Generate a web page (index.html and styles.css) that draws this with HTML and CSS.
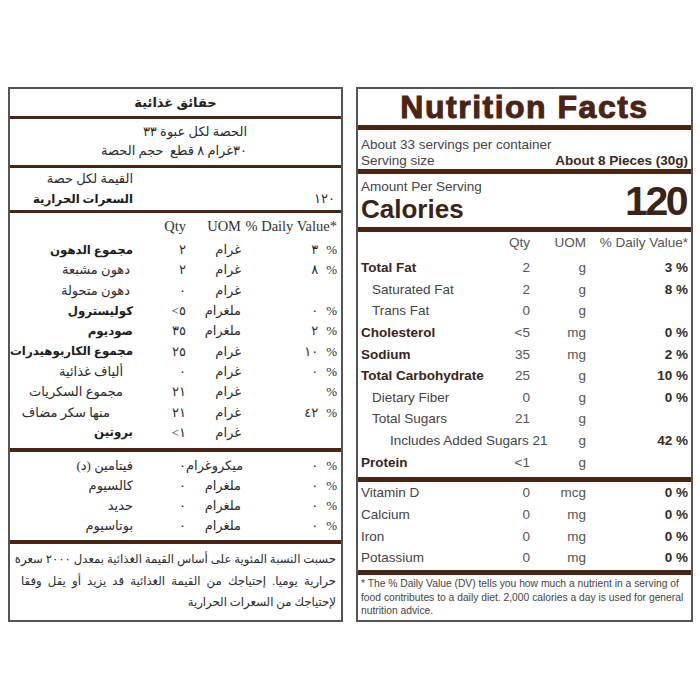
FILE: index.html
```html
<!DOCTYPE html>
<html lang="en">
<head>
<meta charset="utf-8">
<title>Nutrition Facts</title>
<link rel="stylesheet" href="styles.css">
</head>
<body>
<div class="page">
  <section class="panel ar" lang="ar">
    <div class="ar-title" dir="rtl">حقائق غذائية</div>
    <div class="rule r3"></div>
    <div class="ar-serving" dir="rtl">
      <div>الحصة لكل عبوة ٣٣</div>
      <div>٣٠غرام ٨ قطع &nbsp;حجم الحصة</div>
    </div>
    <div class="rule r3"></div>
    <div class="ar-cal">
      <div class="ar-name" dir="rtl">القيمة لكل حصة</div>
      <div></div>
      <div class="ar-name b" dir="rtl">السعرات الحرارية</div>
      <div class="ar-calv">١٢٠</div>
    </div>
    <div class="rule r3"></div>
    <div class="ar-table">
      <div class="ar-row ar-head"><span></span><span class="q">Qty</span><span class="u">UOM</span><span class="hd">% Daily Value*</span></div>
      <div class="ar-row"><span class="n b" dir="rtl">مجموع الدهون</span><span class="q">٢</span><span class="u">غرام</span><span class="d"><i>٣</i><i>%</i></span></div>
      <div class="ar-row"><span class="n s1" dir="rtl">دهون مشبعة</span><span class="q">٢</span><span class="u">غرام</span><span class="d"><i>٨</i><i>%</i></span></div>
      <div class="ar-row"><span class="n s1" dir="rtl">دهون متحولة</span><span class="q">٠</span><span class="u">غرام</span><span class="d"></span></div>
      <div class="ar-row"><span class="n b" dir="rtl">كوليسترول</span><span class="q">&lt;٥</span><span class="u">ملغرام</span><span class="d"><i>٠</i><i>%</i></span></div>
      <div class="ar-row"><span class="n b" dir="rtl">صوديوم</span><span class="q">٣٥</span><span class="u">ملغرام</span><span class="d"><i>٢</i><i>%</i></span></div>
      <div class="ar-row"><span class="n b" dir="rtl">مجموع الكاربوهيدرات</span><span class="q">٢٥</span><span class="u">غرام</span><span class="d"><i>١٠</i><i>%</i></span></div>
      <div class="ar-row"><span class="n s2" dir="rtl">ألياف غذائية</span><span class="q">٠</span><span class="u">غرام</span><span class="d"><i>٠</i><i>%</i></span></div>
      <div class="ar-row"><span class="n s2" dir="rtl">مجموع السكريات</span><span class="q">٢١</span><span class="u">غرام</span><span class="d"><i>%</i></span></div>
      <div class="ar-row"><span class="n s3" dir="rtl">منها سكر مضاف</span><span class="q">٢١</span><span class="u">غرام</span><span class="d"><i>٤٢</i><i>%</i></span></div>
      <div class="ar-row"><span class="n b" dir="rtl">بروتين</span><span class="q">&lt;١</span><span class="u">غرام</span><span class="d"></span></div>
    </div>
    <div class="rule r4"></div>
    <div class="ar-vit">
      <div class="ar-row"><span class="n" dir="rtl">فيتامين (د)</span><span class="q">٠</span><span class="u">ميكروغرام</span><span class="d"><i>٠</i><i>%</i></span></div>
      <div class="ar-row"><span class="n" dir="rtl">كالسيوم</span><span class="q">٠</span><span class="u">ملغرام</span><span class="d"><i>٠</i><i>%</i></span></div>
      <div class="ar-row"><span class="n" dir="rtl">حديد</span><span class="q">٠</span><span class="u">ملغرام</span><span class="d"><i>٠</i><i>%</i></span></div>
      <div class="ar-row"><span class="n" dir="rtl">بوتاسيوم</span><span class="q">٠</span><span class="u">ملغرام</span><span class="d"><i>٠</i><i>%</i></span></div>
    </div>
    <div class="rule r4"></div>
    <div class="ar-foot" dir="rtl">
      <div class="jl">حسبت النسبة المئوية على أساس القيمة الغذائية بمعدل ٢٠٠٠ سعرة</div>
      <div class="jl">حرارية يوميا. إحتياجك من القيمة الغذائية قد يزيد أو يقل وفقا</div>
      <div>لإحتياجك من السعرات الحرارية</div>
    </div>
  </section>

  <section class="panel en">
    <div class="en-title">Nutrition Facts</div>
    <div class="rule r5"></div>
    <div class="en-serv">
      <div class="l1">About 33 servings per container</div>
      <div class="l2"><span>Serving size</span><b>About 8 Pieces (30g)</b></div>
    </div>
    <div class="rule r5"></div>
    <div class="en-cal">
      <div class="en-cal-l">
        <div class="aps">Amount Per Serving</div>
        <div class="cal">Calories</div>
      </div>
      <div class="calv">120</div>
    </div>
    <div class="rule r5"></div>
    <div class="en-table">
      <div class="en-row en-head"><span></span><span class="q">Qty</span><span class="u">UOM</span><span class="d">% Daily Value*</span></div>
      <div class="en-row"><span class="n b">Total Fat</span><span class="q">2</span><span class="u">g</span><span class="d">3 %</span></div>
      <div class="en-row"><span class="n i1">Saturated Fat</span><span class="q">2</span><span class="u">g</span><span class="d">8 %</span></div>
      <div class="en-row"><span class="n i1">Trans Fat</span><span class="q">0</span><span class="u">g</span><span class="d"></span></div>
      <div class="en-row"><span class="n b">Cholesterol</span><span class="q">&lt;5</span><span class="u">mg</span><span class="d">0 %</span></div>
      <div class="en-row"><span class="n b">Sodium</span><span class="q">35</span><span class="u">mg</span><span class="d">2 %</span></div>
      <div class="en-row"><span class="n b">Total Carbohydrate</span><span class="q">25</span><span class="u">g</span><span class="d">10 %</span></div>
      <div class="en-row"><span class="n i1">Dietary Fiber</span><span class="q">0</span><span class="u">g</span><span class="d">0 %</span></div>
      <div class="en-row"><span class="n i1">Total Sugars</span><span class="q">21</span><span class="u">g</span><span class="d"></span></div>
      <div class="en-row"><span class="n i2 wide">Includes Added Sugars 21</span><span class="u">g</span><span class="d">42 %</span></div>
      <div class="en-row"><span class="n b">Protein</span><span class="q">&lt;1</span><span class="u">g</span><span class="d"></span></div>
    </div>
    <div class="rule r5"></div>
    <div class="en-vit">
      <div class="en-row"><span class="n">Vitamin D</span><span class="q">0</span><span class="u">mcg</span><span class="d">0 %</span></div>
      <div class="en-row"><span class="n">Calcium</span><span class="q">0</span><span class="u">mg</span><span class="d">0 %</span></div>
      <div class="en-row"><span class="n">Iron</span><span class="q">0</span><span class="u">mg</span><span class="d">0 %</span></div>
      <div class="en-row"><span class="n">Potassium</span><span class="q">0</span><span class="u">mg</span><span class="d">0 %</span></div>
    </div>
    <div class="rule r5"></div>
    <div class="en-foot">* The % Daily Value (DV) tells you how much a nutrient in a serving of food contributes to a daily diet. 2,000 calories a day is used for general nutrition advice.</div>
  </section>
</div>
</body>
</html>
```

FILE: styles.css
```css
* { box-sizing: border-box; }
body { margin: 0; background: #fff; }

.page {
  display: flex;
  gap: 13px;
  padding: 87px 7px 0 8px;
}

.panel {
  display: flex;
  flex-direction: column;
  height: 535px;
  border: 2px solid #555;
  background: #fff;
}

.rule { background: #4a2514; flex: none; }
.r3 { height: 3px; }
.r4 { height: 4px; }
.r5 { height: 5px; }

/* ---------- Arabic panel ---------- */
.ar {
  width: 335px;
  font-family: "Liberation Serif", "DejaVu Sans", serif;
  color: #2b2b2b;
  font-size: 13px;
}
.ar-title {
  height: 27px;
  display: flex;
  align-items: center;
  justify-content: center;
  font-weight: bold;
  font-size: 13px;
  color: #222;
}
.ar-serving {
  height: 46px;
  padding: 3px 94px 0 0;
  text-align: right;
  line-height: 19px;
}
.ar-cal {
  height: 42px;
  display: grid;
  grid-template-columns: 118px 1fr;
  grid-auto-rows: 20px;
  padding: 1px 5px 0 5px;
  align-items: center;
}
.ar-name { text-align: right; }
.b { font-weight: bold; color: #1c1c1c; }
.ar-row .n.b, .ar-name.b { font-size: 11.8px; }
.ar-calv { text-align: right; padding-right: 1px; }

.ar-table { height: 235px; }
.ar-row {
  display: grid;
  grid-template-columns: 118px 53px 55px 96px;
  padding: 0 4px 0 5px;
  height: 20.3px;
  align-items: center;
  white-space: nowrap;
}
.ar-head {
  height: 27px;
  font-size: 14.5px;
  color: #333;
}
.ar-head .hd { text-align: right; }
.ar-row .n { text-align: right; }
.ar-row .n.s1 { padding-right: 3px; }
.ar-row .n.s2 { padding-right: 10px; }
.ar-row .n.s3 { padding-right: 23px; }
.ar-row .q { text-align: right; }
.ar-row .u { text-align: right; }
.ar-row .d {
  display: flex;
  justify-content: flex-end;
  gap: 8px;
}
.ar-row .d i { font-style: normal; }

.ar-vit { padding: 4px 0; height: 88px; }
.ar-vit .ar-row { height: 20px; }

.ar-foot {
  flex: 1;
  padding: 5px 5px 0 11px;
  text-align: right;
  line-height: 21.5px;
  font-size: 11.7px;
  white-space: nowrap;
}
.ar-foot .jl { text-align: justify; text-align-last: justify; }

/* ---------- English panel ---------- */
.en {
  width: 337px;
  font-family: "Liberation Sans", Arial, sans-serif;
  color: #444;
  font-size: 13.5px;
}
.en-title {
  height: 36px;
  display: flex;
  align-items: center;
  justify-content: center;
  font-weight: bold;
  font-size: 32px;
  letter-spacing: 1.5px;
  color: #4a2514;
  -webkit-text-stroke: 1px #4a2514;
}
.en-serv {
  height: 39px;
  padding: 6px 3px 0 3px;
}
.en-serv .l1 { line-height: 17px; }
.en-serv .l2 {
  line-height: 16px;
  display: flex;
  justify-content: space-between;
}
.en-serv .l2 b { color: #3a2a22; }
.en-cal {
  height: 53px;
  display: flex;
  justify-content: space-between;
  align-items: center;
  padding: 0 3px;
}
.en-cal-l { align-self: stretch; padding-top: 5px; }
.aps { line-height: 16px; }
.cal {
  font-size: 26px;
  font-weight: bold;
  line-height: 28px;
  color: #3a2418;
}
.calv {
  font-size: 41px;
  font-weight: bold;
  letter-spacing: -2.5px;
  color: #3a2418;
  line-height: 40px;
  padding-right: 2px;
}

.en-table { height: 245px; }
.en-row {
  display: grid;
  grid-template-columns: 129px 40px 56px 102px;
  padding: 0 3px;
  height: 21.6px;
  align-items: center;
  white-space: nowrap;
}
.en-head {
  height: 25px;
  align-items: start;
  line-height: 21px;
}
.en-row .q, .en-row .u, .en-row .d { text-align: right; }
.en-row .q, .en-row .u { color: #555; }
.en-row .d { font-weight: bold; color: #3a2a22; }
.en-head .q, .en-head .u, .en-head .d { font-weight: normal; color: #555; }
.en-row .n.b { color: #3a2418; font-weight: bold; }
.en-row .n.i1 { padding-left: 11px; }
.en-row .n.i2 { padding-left: 29px; }
.en-row .n.wide { grid-column: 1 / 3; }

.en-vit { height: 88px; }
.en-vit .en-row { height: 21.7px; }

.en-foot {
  flex: 1;
  padding: 2px 4px 0 3px;
  font-size: 10.3px;
  line-height: 13.5px;
  color: #444;
}
```
